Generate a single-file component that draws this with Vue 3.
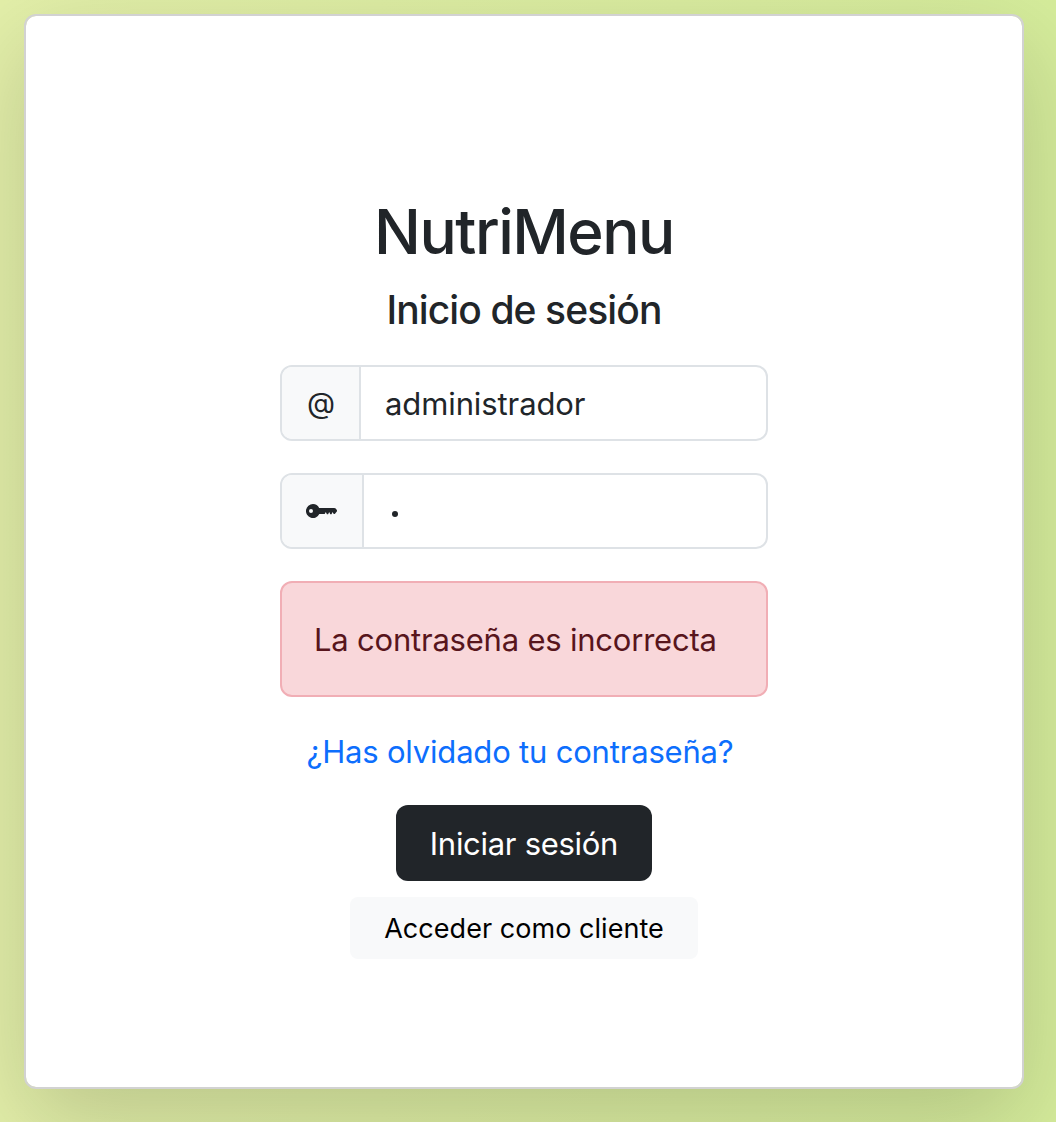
<script setup>
import { ref } from 'vue'

const user = ref('administrador')
const error = ref('La contraseña es incorrecta')
</script>

<template>
  <main class="page">
    <section class="card">
      <h1 class="brand">NutriMenu</h1>
      <h2 class="subtitle">Inicio de sesión</h2>
      <form class="form" @submit.prevent>
        <div class="group">
          <span class="addon at">@</span>
          <div class="field"><span class="value">{{ user }}</span></div>
        </div>
        <div class="group">
          <span class="addon key">
            <svg width="32" height="16" viewBox="0 0 32 16" aria-hidden="true">
              <path
                fill="currentColor"
                fill-rule="evenodd"
                d="M7 1a7 7 0 0 1 6.2 3.9H28.2Q29.1 4.9 29.7 5.6L30.8 7.1Q31.3 7.9 30.8 8.6L29.2 10.4Q28.2 11.4 27.4 10.4L26.6 9.1 25.5 11.2H24.3L23.2 9.1 22.1 11.2H20.9L19.8 9.1 18.7 11H13.3A7 7 0 1 1 7 1ZM5 6a2 2 0 1 0 0 4 2 2 0 0 0 0-4Z"
              />
            </svg>
          </span>
          <div class="field"><span class="dot"></span></div>
        </div>
        <div class="alert" role="alert"><span>{{ error }}</span></div>
      </form>
      <a class="forgot">¿Has olvidado tu contraseña?</a>
      <button class="btn dark" type="button"><span>Iniciar sesión</span></button>
      <button class="btn light" type="button"><span>Acceder como cliente</span></button>
    </section>
  </main>
</template>

<style>
body {
  margin: 0;
}
</style>

<style scoped>
.page {
  box-sizing: border-box;
  width: 1056px;
  height: 1122px;
  padding: 14px 32px 33px 24px;
  overflow: hidden;
  background: linear-gradient(90deg, #e3efa9 0%, #d5ec9b 100%);
  font-family: Inter, "Liberation Sans", sans-serif;
  color: #212529;
}
.card {
  box-sizing: border-box;
  width: 1000px;
  height: 1075px;
  padding-top: 178px;
  display: flex;
  flex-direction: column;
  align-items: center;
  background: #fff;
  background-clip: padding-box;
  border: 2px solid #d2d2d2;
  border-radius: 12px;
  box-shadow: 0 32px 96px rgba(0, 0, 0, 0.175);
}
.brand,
.subtitle {
  margin: 0;
  font-weight: 500;
  white-space: nowrap;
}
.brand {
  font-size: 62px;
  line-height: 76px;
  letter-spacing: -1.5px;
}
.subtitle {
  margin-top: 16px;
  font-size: 39px;
  line-height: 48px;
  letter-spacing: -0.9px;
}
.form {
  width: 488px;
  margin-top: 31px;
  display: flex;
  flex-direction: column;
  gap: 32px;
}
.group {
  box-sizing: border-box;
  height: 76px;
  display: flex;
  border: 2px solid #dee2e6;
  border-radius: 12px;
  overflow: hidden;
}
.addon {
  box-sizing: border-box;
  display: flex;
  align-items: center;
  justify-content: center;
  background: #f8f9fa;
  border-right: 2px solid #dee2e6;
}
.at {
  width: 79px;
  padding: 0 0 2px 1px;
  font-size: 29px;
}
.key {
  width: 82px;
}
.field {
  flex: 1;
  display: flex;
  align-items: center;
  padding-left: 24px;
  font-size: 31px;
  letter-spacing: -0.1px;
}
.dot {
  width: 6px;
  height: 6px;
  margin: 5px 0 0 4px;
  border-radius: 50%;
  background: #212529;
}
.alert {
  box-sizing: border-box;
  height: 116px;
  padding-left: 32px;
  display: flex;
  align-items: center;
  color: #58151c;
  background: #f9d7da;
  border: 2px solid #f1aeb5;
  border-radius: 12px;
  font-size: 31px;
  letter-spacing: -0.21px;
  white-space: nowrap;
}
.forgot {
  margin: 31px 8px 0 0;
  font-size: 31px;
  line-height: 48px;
  letter-spacing: -0.19px;
  color: #0d6efd;
  white-space: nowrap;
}
.btn {
  box-sizing: border-box;
  padding: 0;
  border: 0;
  font-family: inherit;
  white-space: nowrap;
}
.dark {
  width: 256px;
  height: 76px;
  margin-top: 29px;
  border-radius: 12px;
  background: #212529;
  color: #fff;
  font-size: 31px;
  letter-spacing: -0.29px;
}
.light {
  width: 348px;
  height: 62px;
  margin-top: 16px;
  border-radius: 8px;
  background: #f8f9fa;
  color: #000;
  font-size: 27px;
  letter-spacing: 0.04px;
}
</style>
